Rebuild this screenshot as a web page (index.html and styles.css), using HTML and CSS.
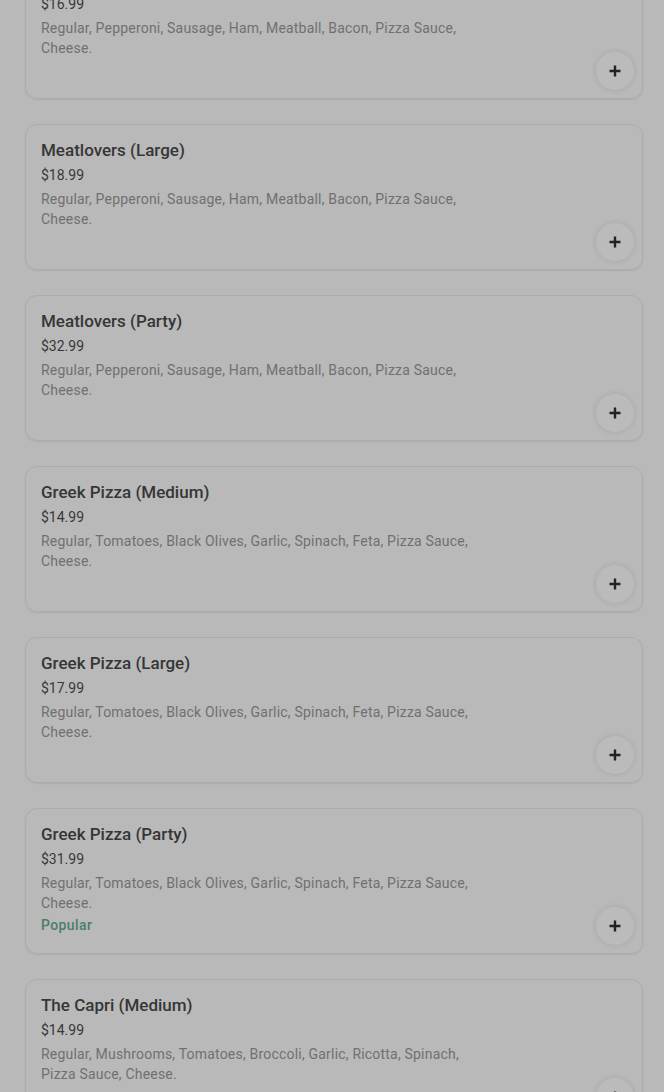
FILE: index.html
```html
<!DOCTYPE html>
<html>
<head>
<meta charset="utf-8">
<link rel="stylesheet" href="styles.css">
</head>
<body>
<div class="list">
  <div class="card">
    <div class="info">
      <div class="title">Meatlovers (Medium)</div>
      <div class="price">$16.99</div>
      <div class="desc">Regular, Pepperoni, Sausage, Ham, Meatball, Bacon, Pizza Sauce, Cheese.</div>
    </div>
    <button class="add"><svg viewBox="0 0 12 12" width="12" height="12"><path d="M6 0.5v11M0.5 6h11"/></svg></button>
  </div>
  <div class="card">
    <div class="info">
      <div class="title">Meatlovers (Large)</div>
      <div class="price">$18.99</div>
      <div class="desc">Regular, Pepperoni, Sausage, Ham, Meatball, Bacon, Pizza Sauce, Cheese.</div>
    </div>
    <button class="add"><svg viewBox="0 0 12 12" width="12" height="12"><path d="M6 0.5v11M0.5 6h11"/></svg></button>
  </div>
  <div class="card">
    <div class="info">
      <div class="title">Meatlovers (Party)</div>
      <div class="price">$32.99</div>
      <div class="desc">Regular, Pepperoni, Sausage, Ham, Meatball, Bacon, Pizza Sauce, Cheese.</div>
    </div>
    <button class="add"><svg viewBox="0 0 12 12" width="12" height="12"><path d="M6 0.5v11M0.5 6h11"/></svg></button>
  </div>
  <div class="card">
    <div class="info">
      <div class="title">Greek Pizza (Medium)</div>
      <div class="price">$14.99</div>
      <div class="desc">Regular, Tomatoes, Black Olives, Garlic, Spinach, Feta, Pizza Sauce, Cheese.</div>
    </div>
    <button class="add"><svg viewBox="0 0 12 12" width="12" height="12"><path d="M6 0.5v11M0.5 6h11"/></svg></button>
  </div>
  <div class="card">
    <div class="info">
      <div class="title">Greek Pizza (Large)</div>
      <div class="price">$17.99</div>
      <div class="desc">Regular, Tomatoes, Black Olives, Garlic, Spinach, Feta, Pizza Sauce, Cheese.</div>
    </div>
    <button class="add"><svg viewBox="0 0 12 12" width="12" height="12"><path d="M6 0.5v11M0.5 6h11"/></svg></button>
  </div>
  <div class="card">
    <div class="info">
      <div class="title">Greek Pizza (Party)</div>
      <div class="price">$31.99</div>
      <div class="desc">Regular, Tomatoes, Black Olives, Garlic, Spinach, Feta, Pizza Sauce, Cheese.</div>
      <div class="tag">Popular</div>
    </div>
    <button class="add"><svg viewBox="0 0 12 12" width="12" height="12"><path d="M6 0.5v11M0.5 6h11"/></svg></button>
  </div>
  <div class="card">
    <div class="info">
      <div class="title">The Capri (Medium)</div>
      <div class="price">$14.99</div>
      <div class="desc">Regular, Mushrooms, Tomatoes, Broccoli, Garlic, Ricotta, Spinach, Pizza Sauce, Cheese.</div>
    </div>
    <button class="add"><svg viewBox="0 0 12 12" width="12" height="12"><path d="M6 0.5v11M0.5 6h11"/></svg></button>
  </div>
</div>
</body>
</html>
```
FILE: styles.css
```css
html, body {
  margin: 0;
  padding: 0;
  background: #b9b9b9;
  overflow: hidden;
  height: 1092px;
}
body {
  font-family: Roboto, "Liberation Sans", sans-serif;
}
.list {
  display: flex;
  flex-direction: column;
  gap: 25px;
  padding: 0 21px 0 25px;
  margin-top: -47px;
}
.card {
  box-sizing: border-box;
  height: 146px;
  border: 1px solid #acacac;
  border-radius: 12px;
  box-shadow: 0 1px 2px rgba(0,0,0,0.07);
  display: flex;
  justify-content: space-between;
  align-items: flex-end;
  padding: 13px 8px 8px 15px;
}
.info {
  align-self: flex-start;
  display: flex;
  flex-direction: column;
}
.title {
  font-size: 17px;
  font-weight: 500;
  line-height: 24px;
  color: #363636;
}
.price {
  font-size: 14px;
  line-height: 20px;
  margin-top: 3px;
  color: #383838;
}
.desc {
  font-size: 14px;
  line-height: 20px;
  margin-top: 4px;
  color: #707070;
  max-width: 450px;
  letter-spacing: 0.2px;
}
.tag {
  font-size: 14px;
  line-height: 20px;
  margin-top: 2px;
  font-weight: 500;
  color: #4b7f66;
  letter-spacing: 0.4px;
}
.add {
  width: 38px;
  height: 38px;
  border-radius: 50%;
  border: none;
  background: #bbbbbb;
  box-shadow: 0 0 6px rgba(0,0,0,0.1);
  padding: 0;
  flex-shrink: 0;
  display: flex;
  align-items: center;
  justify-content: center;
}
.add svg {
  stroke: #222;
  stroke-width: 2.4;
  fill: none;
}
```
